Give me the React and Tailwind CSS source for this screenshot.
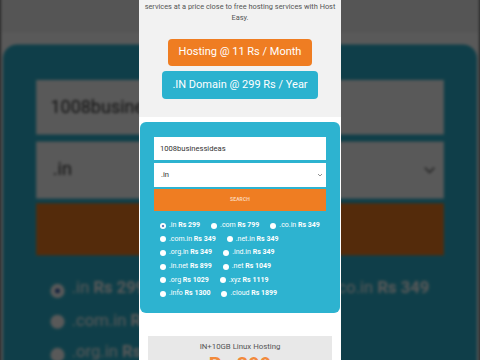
import React from "react";

const rows = [
  [[".in", "Rs 299", true], [".com", "Rs 799"], [".co.in", "Rs 349"]],
  [[".com.in", "Rs 349"], [".net.in", "Rs 349"]],
  [[".org.in", "Rs 349"], [".ind.in", "Rs 349"]],
  [[".in.net", "Rs 899"], [".net", "Rs 1049"]],
  [[".org", "Rs 1029"], [".xyz", "Rs 1119"]],
  [[".info", "Rs 1300"], [".cloud", "Rs 1899"]],
];

function Radio({ checked }) {
  return (
    <span className="w-[6px] h-[6px] rounded-full bg-white flex items-center justify-center shrink-0">
      {checked && <span className="w-[4px] h-[4px] rounded-full bg-[#1d4ea8] border border-white" />}
    </span>
  );
}

function Screen() {
  return (
    <div className="w-[202px] h-[360px] bg-white font-['Roboto',sans-serif] overflow-hidden">
      {/* top promo */}
      <div className="h-[117px] bg-[#f2f2f2] flex flex-col items-center">
        <p className="text-[7.4px] leading-[11px] text-[#555] text-center pt-[1px] whitespace-nowrap">
          services at a price close to free hosting services with Host
          <br />
          Easy.
        </p>
        <div className="mt-[16px] w-[144px] h-[27px] rounded-[4px] bg-[#ef7d22] text-white text-[11px] flex items-center justify-center">
          Hosting @ 11 Rs / Month
        </div>
        <div className="mt-[5px] w-[156px] h-[28px] rounded-[4px] bg-[#2bb2cf] text-white text-[11px] flex items-center justify-center">
          .IN Domain @ 299 Rs / Year
        </div>
      </div>

      {/* search card */}
      <div className="mt-[5px] mx-[1px] h-[191px] rounded-[6px] bg-[#2db3d0] pt-[15px] px-[14px]">
        <div className="h-[23px] bg-white flex items-center pl-[6px] text-[7.6px] text-[#333]">
          1008businessideas
        </div>
        <div className="mt-[3px] h-[24px] bg-white flex items-center justify-between pl-[7px] pr-[3px] text-[7.6px] text-[#333]">
          <span>.in</span>
          <svg width="6" height="4" viewBox="0 0 6 4" fill="none">
            <path d="M1 1l2 2 2-2" stroke="#777" strokeWidth="0.8" />
          </svg>
        </div>
        <div className="mt-[2px] h-[22px] bg-[#ef7d22] flex items-center justify-center text-[5px] font-bold text-[#fbd3b0] tracking-wide">
          SEARCH
        </div>
        <div className="mt-[8px] pl-[6px] flex flex-col">
          {rows.map((row, i) => (
            <div key={i} className="h-[13.6px] flex items-center gap-[11px]">
              {row.map(([ext, price, checked]) => (
                <div key={ext} className="flex items-center gap-[3px] text-[7px] leading-none text-white whitespace-nowrap">
                  <Radio checked={checked} />
                  <span>
                    {ext} <b className="font-bold">{price}</b>
                  </span>
                </div>
              ))}
            </div>
          ))}
        </div>
      </div>

      {/* plan box */}
      <div className="mt-[23px] mx-[9px] bg-[#e8e8e8] pt-[6px] flex flex-col items-center">
        <p className="text-[7.8px] text-[#555] leading-[10px]">IN+10GB Linux Hosting</p>
        <p className="mt-[3px] text-[20px] font-bold text-[#f28a3b] leading-none">Rs 399</p>
      </div>
    </div>
  );
}

export default function App() {
  return (
    <div className="relative w-[480px] h-[360px] overflow-hidden bg-[#575757] flex justify-center">
      {/* blurred enlarged backdrop */}
      <div className="absolute left-[139px] top-0 scale-[2.37] origin-[101px_178.6px] blur-[0.6px]">
        <Screen />
      </div>
      <div className="absolute inset-0 bg-black/65" />
      <div className="relative">
        <Screen />
      </div>
    </div>
  );
}
